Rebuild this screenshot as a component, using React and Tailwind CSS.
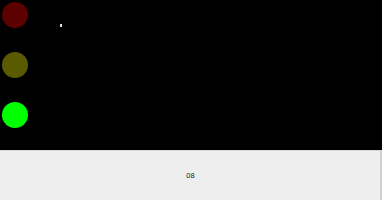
export default function App() {
  return (
    <div className="w-[382px] h-[200px] bg-black flex flex-col font-['Liberation_Sans',sans-serif] relative overflow-hidden">
      {/* ── Lights ─────────────────────────────── */}
      <div className="h-[150px] flex flex-col gap-[24px] pt-[2px] pl-[2px]">
        <div className="w-[26px] h-[26px] rounded-full bg-[#5c0000]" />
        <div className="w-[26px] h-[26px] rounded-full bg-[#5a5a00]" />
        <div className="w-[26px] h-[26px] rounded-full bg-[#00ff00]" />
      </div>

      {/* mouse pointer speck */}
      <div className="absolute left-[60px] top-[24px] w-[2px] h-[3px] bg-[#dddddd]" />

      {/* ── Counter bar ────────────────────────── */}
      <div className="flex-1 bg-[#eeeeee] border-t border-[#d8d8d8] border-r-2 border-r-[#d0d0d0] flex items-center justify-center">
        <span className="text-[7.5px] text-[#222] leading-none pl-[1px]">08</span>
      </div>
    </div>
  );
}
